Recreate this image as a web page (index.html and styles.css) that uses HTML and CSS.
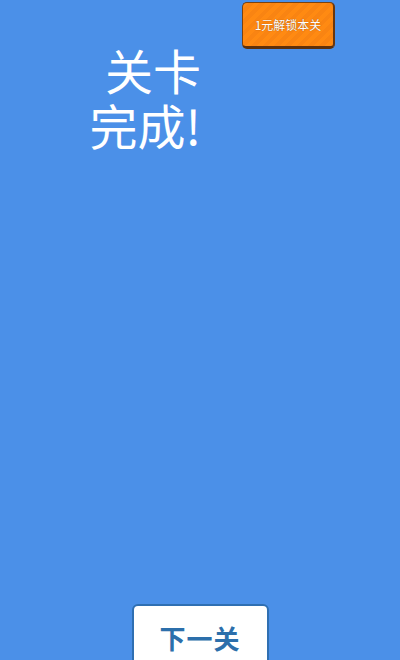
FILE: index.html
```html
<!DOCTYPE html>
<html lang="zh-CN">
<head>
  <meta charset="UTF-8">
  <meta name="viewport" content="width=device-width, initial-scale=1.0">
  <title>关卡完成</title>
  <link rel="stylesheet" href="styles.css">
</head>
<body>
  <div class="page">
    <div class="top">
      <h1 class="title">关卡<br>完成!</h1>
      <button class="unlock">1元解锁本关</button>
    </div>
    <button class="next">下一关</button>
  </div>
</body>
</html>
```

FILE: styles.css
```css
*{
  margin: 0;
  padding: 0;
  box-sizing: border-box;
}

body{
  background-color: #4b90e8;
  font-family: "Noto Sans CJK SC", "Noto Sans", sans-serif;
}

.page{
  display: flex;
  flex-direction: column;
  align-items: center;
  width: 400px;
  height: 660px;
  overflow: hidden;
}

.top{
  display: flex;
  align-items: flex-start;
  width: 100%;
}

.top > .title{
  width: 201px;
  padding-top: 42px;
  text-align: right;
  color: #fff;
  font-size: 48px;
  font-weight: 400;
  line-height: 55px;
}

.top > .unlock{
  margin-top: 2px;
  margin-left: 41px;
  width: 93px;
  height: 47px;
  border: 1px solid #7a4210;
  border-bottom: 3px solid #5e300c;
  border-right: 2px solid #6a370e;
  border-radius: 5px;
  background: repeating-linear-gradient(135deg, #ff8a12 0 4px, #f98412 4px 8px);
  color: #fff;
  font-family: inherit;
  font-size: 12px;
  text-shadow: 0 0 1px #8a4a10;
}

.next{
  margin-top: auto;
  margin-bottom: -10px;
  width: 137px;
  height: 66px;
  border: 2px solid #2f6fb2;
  border-radius: 6px;
  background-color: #fff;
  color: #2c6fab;
  font-family: inherit;
  font-size: 26px;
  font-weight: 700;
  letter-spacing: 1px;
}
```
